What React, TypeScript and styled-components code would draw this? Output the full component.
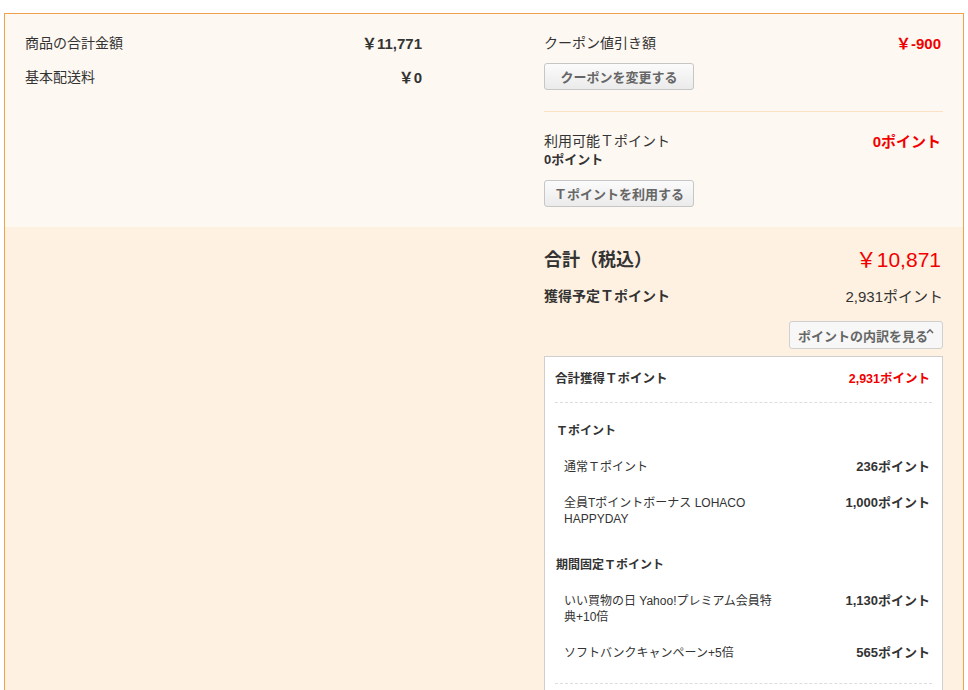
import styled, { createGlobalStyle } from 'styled-components';

interface PointItem {
  label: string;
  points: string;
}

interface PointGroup {
  title: string;
  items: PointItem[];
}

const groups: PointGroup[] = [
  {
    title: 'Ｔポイント',
    items: [
      { label: '通常Ｔポイント', points: '236ポイント' },
      { label: '全員Tポイントボーナス LOHACO HAPPYDAY', points: '1,000ポイント' },
    ],
  },
  {
    title: '期間固定Ｔポイント',
    items: [
      { label: 'いい買物の日 Yahoo!プレミアム会員特典+10倍', points: '1,130ポイント' },
      { label: 'ソフトバンクキャンペーン+5倍', points: '565ポイント' },
    ],
  },
];

const App = () => (
  <>
    <GlobalStyle />
    <Summary>
      <UpperSection>
        <Column>
          <Line>
            <Label>商品の合計金額</Label>
            <Amount>￥11,771</Amount>
          </Line>
          <Line spaced>
            <Label>基本配送料</Label>
            <Amount>￥0</Amount>
          </Line>
        </Column>
        <Column>
          <Line>
            <Label>クーポン値引き額</Label>
            <Amount red>￥-900</Amount>
          </Line>
          <GrayButton>クーポンを変更する</GrayButton>
          <Divider />
          <Line>
            <Label>利用可能Ｔポイント</Label>
            <Amount red>0ポイント</Amount>
          </Line>
          <SubAmount>0ポイント</SubAmount>
          <GrayButton>Ｔポイントを利用する</GrayButton>
        </Column>
      </UpperSection>
      <LowerSection>
        <div />
        <Column>
          <TotalLine>
            <span>合計（税込）</span>
            <TotalPrice>￥10,871</TotalPrice>
          </TotalLine>
          <EarnLine>
            <span>獲得予定Ｔポイント</span>
            <EarnValue>2,931ポイント</EarnValue>
          </EarnLine>
          <ToggleRow>
            <ToggleButton>
              ポイントの内訳を見る
              <svg width="8" height="6" viewBox="0 0 8 6">
                <path d="M1 5 L4 1.8 L7 5" fill="none" stroke="#666" strokeWidth="1.6" />
              </svg>
            </ToggleButton>
          </ToggleRow>
          <Breakdown>
            <BreakdownTotal>
              <span>合計獲得Ｔポイント</span>
              <RedText>2,931ポイント</RedText>
            </BreakdownTotal>
            <GroupList>
              {groups.map((group) => (
                <div key={group.title}>
                  <GroupTitle>{group.title}</GroupTitle>
                  {group.items.map((item) => (
                    <Item key={item.label}>
                      <ItemLabel>{item.label}</ItemLabel>
                      <ItemPoints>{item.points}</ItemPoints>
                    </Item>
                  ))}
                </div>
              ))}
            </GroupList>
          </Breakdown>
        </Column>
      </LowerSection>
    </Summary>
  </>
);

export default App;

const GlobalStyle = createGlobalStyle`
  body {
    margin: 0;
    background: #ffffff;
    font-family: "Liberation Sans", "Noto Sans CJK JP", sans-serif;
    color: #333333;
  }
`;

const Summary = styled.div`
  margin: 13px 4px 0;
  border: 1px solid #f0a24e;
  border-bottom: none;
  height: 677px;
  overflow: hidden;
  background: #fff1e1;
`;

const UpperSection = styled.div`
  display: grid;
  grid-template-columns: 1fr 1fr;
  column-gap: 120px;
  padding: 18px 20px 20px;
  background: #fef8f2;
`;

const LowerSection = styled.div`
  display: grid;
  grid-template-columns: 1fr 1fr;
  column-gap: 120px;
  padding: 18px 20px 0;
`;

const Column = styled.div`
  display: flex;
  flex-direction: column;
  align-items: stretch;
  min-width: 0;
`;

const Line = styled.div<{ spaced?: boolean }>`
  display: flex;
  justify-content: space-between;
  align-items: center;
  height: 20px;
  margin-top: ${({ spaced }) => (spaced ? '14px' : '0')};
  font-size: 14px;
`;

const Label = styled.span`
  color: #333;
`;

const Amount = styled.span<{ red?: boolean }>`
  margin-right: 2px;
  font-size: 15px;
  font-weight: 700;
  color: ${({ red }) => (red ? '#f00000' : '#333')};
`;

const SubAmount = styled.div`
  font-size: 13px;
  font-weight: 700;
  line-height: 20px;
`;

const GrayButton = styled.button`
  align-self: flex-start;
  margin-top: 11px;
  width: 150px;
  height: 27px;
  padding: 0;
  border: 1px solid #c6c6c6;
  border-radius: 3px;
  background: linear-gradient(#fbfbfb, #ebebeb);
  font-family: inherit;
  font-size: 13px;
  font-weight: 700;
  color: #666;
  cursor: pointer;

  ${SubAmount} + & {
    margin-top: 10px;
  }
`;

const Divider = styled.hr`
  margin: 21px 0 18px;
  border: none;
  border-top: 1px solid #fbe1c6;
  width: 100%;
`;

const TotalLine = styled.div`
  display: flex;
  justify-content: space-between;
  align-items: center;
  height: 26px;
  font-size: 18px;
  font-weight: 700;
`;

const TotalPrice = styled.span`
  margin-right: 2px;
  font-size: 21px;
  font-weight: 400;
  color: #f00000;
`;

const EarnLine = styled.div`
  display: flex;
  justify-content: space-between;
  align-items: center;
  margin-top: 14px;
  height: 20px;
  font-size: 14px;
  font-weight: 700;
`;

const EarnValue = styled.span`
  font-size: 15px;
  font-weight: 400;
`;

const ToggleRow = styled.div`
  display: flex;
  justify-content: flex-end;
  margin-top: 16px;
`;

const ToggleButton = styled.button`
  display: flex;
  align-items: center;
  justify-content: center;
  width: 154px;
  height: 28px;
  padding: 0;
  border: 1px solid #cfcfcf;
  border-radius: 3px;
  background: #f7f7f7;
  font-family: inherit;
  font-size: 13px;
  font-weight: 700;
  color: #666;

  svg {
    margin: -8px 0 0 -2px;
  }
`;

const Breakdown = styled.div`
  margin-top: 7px;
  background: #ffffff;
  border: 1px solid #cfcfcf;
  padding: 0 10px 40px;
  font-size: 12px;
`;

const BreakdownTotal = styled.div`
  display: flex;
  justify-content: space-between;
  align-items: center;
  padding: 14px 2px 15px 0;
  line-height: 16px;
  font-size: 12.5px;
  font-weight: 700;
  border-bottom: 1px dashed #dddddd;
`;

const RedText = styled.span`
  color: #f00000;
`;

const GroupList = styled.div`
  padding-bottom: 12px;
  border-bottom: 1px dashed #dddddd;
`;

const GroupTitle = styled.div`
  padding: 20px 0 10px 1px;
  line-height: 16px;
  font-weight: 700;
`;

const Item = styled.div`
  display: flex;
  justify-content: space-between;
  align-items: flex-start;
  padding: 10px 2px 10px 9px;
  line-height: 16px;
`;

const ItemLabel = styled.span`
  width: 215px;
`;

const ItemPoints = styled.span`
  font-size: 13px;
  font-weight: 700;
  white-space: nowrap;
`;
